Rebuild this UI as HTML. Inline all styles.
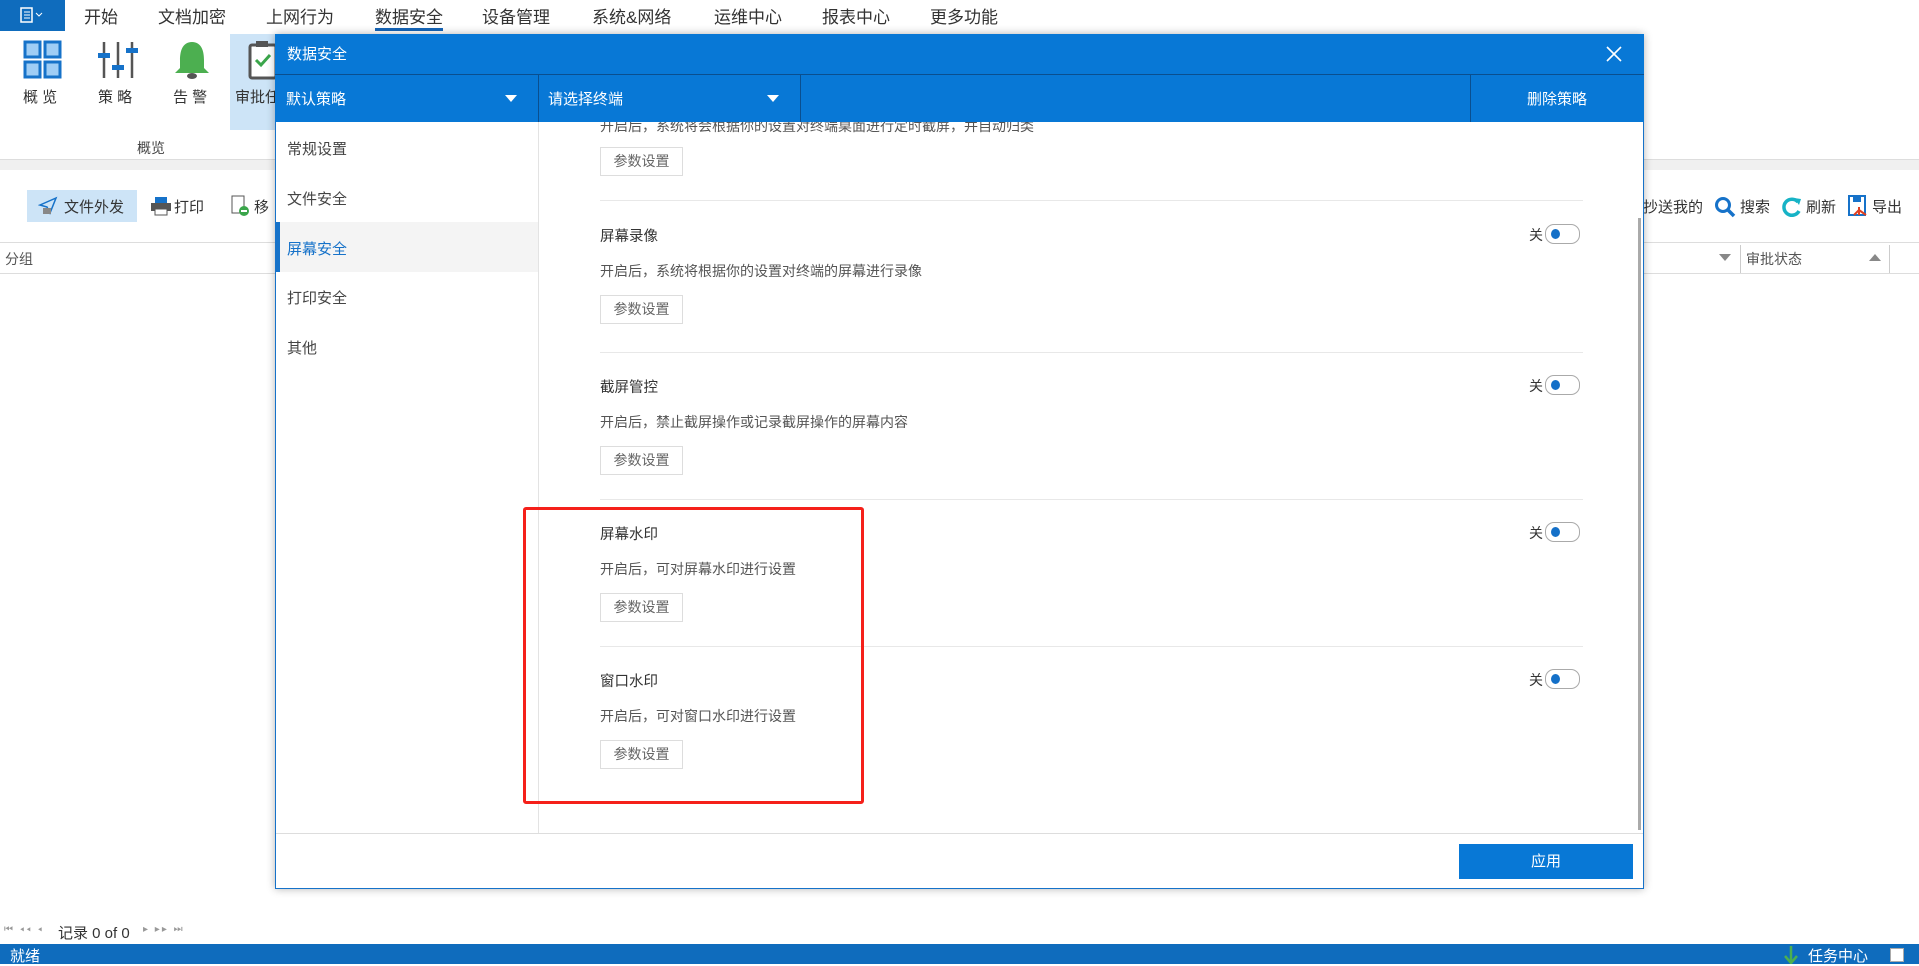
<!DOCTYPE html>
<html><head><meta charset="utf-8"><style>
*{margin:0;padding:0;box-sizing:border-box}
body{width:1919px;height:964px;position:relative;overflow:hidden;background:#fff;font-family:"Liberation Sans","Noto Sans CJK SC",sans-serif;color:#333}
.a{position:absolute;white-space:nowrap}
.tab{top:3px;font-size:17px;color:#333}
.rl{font-size:15px;color:#333;top:86px}
.mi{left:287px;font-size:15px;color:#444}
.ct{left:600px;font-size:14.5px;color:#333}
.cd{left:600px;font-size:14px;color:#555}
.btn{left:600px;width:83px;height:29px;border:1px solid #ddd;font-size:14px;color:#666;text-align:center;line-height:27px;background:#fff}
.sep{left:600px;width:983px;height:1px;background:#e8e8e8}
.off{left:1529px;font-size:14px;color:#333}
.tg{left:1545px;width:35px;height:20px;border:1px solid #aaa;border-radius:9px;background:#fff}
.tg:after{content:"";position:absolute;left:5px;top:4px;width:9px;height:10px;border-radius:50%;background:#1470c8}
</style></head><body>
<!-- top menu -->
<div class="a" style="left:0;top:0;width:65px;height:31px;background:#0f6cbd"></div>
<svg class="a" style="left:20px;top:7px" width="26" height="16"><rect x="1" y="1" width="11" height="14" fill="none" stroke="#fff" stroke-width="1.5"/><line x1="4" y1="5" x2="10" y2="5" stroke="#fff"/><line x1="4" y1="8" x2="10" y2="8" stroke="#fff"/><line x1="4" y1="11" x2="10" y2="11" stroke="#fff"/><path d="M16 6 l3 3 l3 -3" fill="none" stroke="#fff"/></svg>
<div class="a tab" style="left:84px">开始</div>
<div class="a tab" style="left:158px">文档加密</div>
<div class="a tab" style="left:266px">上网行为</div>
<div class="a tab" style="left:375px">数据安全</div>
<div class="a" style="left:375px;top:28px;width:68px;height:3px;background:#1565b8"></div>
<div class="a tab" style="left:482px">设备管理</div>
<div class="a tab" style="left:592px">系统&amp;网络</div>
<div class="a tab" style="left:714px">运维中心</div>
<div class="a tab" style="left:822px">报表中心</div>
<div class="a tab" style="left:930px">更多功能</div>
<!-- ribbon -->
<div class="a" style="left:230px;top:34px;width:50px;height:96px;background:#cde4f7"></div>
<svg class="a" style="left:23px;top:40px" width="40" height="40"><g fill="#9fcdf5" stroke="#1672c9" stroke-width="3"><rect x="2" y="2" width="15" height="15"/><rect x="22" y="2" width="15" height="15"/><rect x="2" y="22" width="15" height="15"/><rect x="22" y="22" width="15" height="15"/></g></svg>
<svg class="a" style="left:98px;top:40px" width="40" height="40"><g stroke="#555" stroke-width="2.5"><line x1="6" y1="2" x2="6" y2="38"/><line x1="20" y1="2" x2="20" y2="38"/><line x1="34" y1="2" x2="34" y2="38"/></g><g fill="#1672c9"><rect x="0" y="13" width="12" height="5"/><rect x="14" y="25" width="12" height="5"/><rect x="28" y="8" width="12" height="5"/></g></svg>
<svg class="a" style="left:172px;top:40px" width="40" height="40"><path d="M20 2 C10 2 8 12 8 20 L8 28 L3 33 L37 33 L32 28 L32 20 C32 12 30 2 20 2Z" fill="#4caf50"/><ellipse cx="20" cy="36" rx="5" ry="3" fill="#555"/></svg>
<svg class="a" style="left:248px;top:40px" width="28" height="40"><rect x="2" y="5" width="26" height="33" rx="2" fill="#fff" stroke="#555" stroke-width="3"/><rect x="8" y="1" width="12" height="6" fill="#555"/><path d="M8 20 l5 5 l9 -10" fill="none" stroke="#3aa54a" stroke-width="3"/></svg>
<div class="a rl" style="left:23px">概&nbsp;览</div>
<div class="a rl" style="left:98px">策&nbsp;略</div>
<div class="a rl" style="left:173px">告&nbsp;警</div>
<div class="a rl" style="left:235px">审批任</div>
<div class="a" style="left:137px;top:138px;font-size:14px;color:#444">概览</div>
<div class="a" style="left:0;top:159px;width:1919px;height:11px;background:#f0f0f0;border-top:1px solid #ddd"></div>
<!-- toolbar -->
<div class="a" style="left:27px;top:190px;width:110px;height:32px;background:#cde4f7"></div>
<svg class="a" style="left:38px;top:196px" width="20" height="20"><path d="M2 9 L18 2 L12 17 L9 11Z" fill="none" stroke="#1672c9" stroke-width="1.5"/><rect x="5" y="12" width="8" height="6" fill="#888"/></svg>
<div class="a" style="left:64px;top:196px;font-size:15px">文件外发</div>
<svg class="a" style="left:150px;top:196px" width="22" height="20"><rect x="5" y="1" width="12" height="6" fill="#1672c9"/><rect x="1" y="7" width="20" height="8" fill="#555"/><rect x="5" y="13" width="12" height="6" fill="#fff" stroke="#555"/></svg>
<div class="a" style="left:174px;top:196px;font-size:15px">打印</div>
<svg class="a" style="left:230px;top:195px" width="20" height="22"><rect x="2" y="1" width="12" height="17" fill="#fff" stroke="#555"/><circle cx="14" cy="16" r="5" fill="#3aa54a"/><rect x="11" y="15" width="6" height="2" fill="#fff"/></svg>
<div class="a" style="left:254px;top:196px;font-size:15px">移</div>
<div class="a" style="left:1643px;top:196px;font-size:15px">抄送我的</div>
<svg class="a" style="left:1714px;top:196px" width="22" height="22"><circle cx="9" cy="9" r="6.5" fill="none" stroke="#1672c9" stroke-width="3"/><line x1="14" y1="14" x2="20" y2="20" stroke="#1672c9" stroke-width="3.5"/></svg>
<div class="a" style="left:1740px;top:196px;font-size:15px">搜索</div>
<svg class="a" style="left:1781px;top:196px" width="22" height="22"><path d="M17 6 A8 8 0 1 0 18 15" fill="none" stroke="#17b3c6" stroke-width="3.5"/><path d="M13 2 L20 3 L18 9Z" fill="#17b3c6"/></svg>
<div class="a" style="left:1806px;top:196px;font-size:15px">刷新</div>
<svg class="a" style="left:1848px;top:195px" width="22" height="22"><rect x="1" y="1" width="16" height="19" fill="#fff" stroke="#1672c9" stroke-width="2"/><rect x="5" y="1" width="8" height="6" fill="#1672c9"/><path d="M11 12 L11 20 M11 15 L6 20 M11 15 L18 20" stroke="#e04020" stroke-width="2"/></svg>
<div class="a" style="left:1872px;top:196px;font-size:15px">导出</div>
<!-- table header -->
<div class="a" style="left:0;top:242px;width:1919px;height:1px;background:#ddd"></div>
<div class="a" style="left:0;top:273px;width:1919px;height:1px;background:#ddd"></div>
<div class="a" style="left:5px;top:249px;font-size:14px;color:#555">分组</div>
<div class="a" style="left:1719px;top:254px;width:0;height:0;border-left:6px solid transparent;border-right:6px solid transparent;border-top:7px solid #888"></div>
<div class="a" style="left:1740px;top:245px;width:1px;height:28px;background:#ccc"></div>
<div class="a" style="left:1746px;top:249px;font-size:14px;color:#555">审批状态</div>
<div class="a" style="left:1869px;top:254px;width:0;height:0;border-left:6px solid transparent;border-right:6px solid transparent;border-bottom:7px solid #888"></div>
<div class="a" style="left:1889px;top:245px;width:1px;height:28px;background:#ccc"></div>
<!-- pager & status -->
<div class="a" style="left:4px;top:924px;font-size:10px;color:#999;letter-spacing:2px">⏮ ◂◂ ◂</div>
<div class="a" style="left:58px;top:922px;font-size:15px;color:#333">记录 0 of 0</div>
<div class="a" style="left:143px;top:924px;font-size:10px;color:#999;letter-spacing:2px">▸ ▸▸ ⏭</div>
<div class="a" style="left:0;top:944px;width:1919px;height:20px;background:#0f6cbd"></div>
<div class="a" style="left:10px;top:945px;font-size:15px;color:#fff">就绪</div>
<svg class="a" style="left:1783px;top:945px" width="16" height="19"><path d="M8 1 L8 18 M2 11 L8 18 L14 11" stroke="#4caf50" stroke-width="2.5" fill="none"/></svg>
<div class="a" style="left:1808px;top:945px;font-size:15px;color:#fff">任务中心</div>
<div class="a" style="left:1890px;top:948px;width:14px;height:14px;background:#fff;border:1px solid #aaa"></div>
<!-- dialog -->
<div class="a" style="left:275px;top:34px;width:1369px;height:855px;background:#fff;border:1px solid #1672c9;box-shadow:0 0 8px rgba(0,0,0,.3)"></div>
<div class="a" style="left:275px;top:34px;width:1369px;height:40px;background:#0878d6"></div>
<div class="a" style="left:287px;top:43px;font-size:15px;color:#fff">数据安全</div>
<svg class="a" style="left:1606px;top:46px" width="16" height="16"><path d="M1 1 L15 15 M15 1 L1 15" stroke="#fff" stroke-width="1.6"/></svg>
<div class="a" style="left:275px;top:74px;width:1369px;height:48px;background:#0878d6;border-top:1px solid #0a4f8f"></div>
<div class="a" style="left:538px;top:75px;width:1px;height:47px;background:#0a4f8f"></div>
<div class="a" style="left:800px;top:75px;width:1px;height:47px;background:#0a4f8f"></div>
<div class="a" style="left:1470px;top:75px;width:1px;height:47px;background:#0a4f8f"></div>
<div class="a" style="left:286px;top:88px;font-size:15px;color:#fff">默认策略</div>
<div class="a" style="left:505px;top:95px;border-left:6px solid transparent;border-right:6px solid transparent;border-top:7px solid #fff"></div>
<div class="a" style="left:548px;top:88px;font-size:15px;color:#fff">请选择终端</div>
<div class="a" style="left:767px;top:95px;border-left:6px solid transparent;border-right:6px solid transparent;border-top:7px solid #fff"></div>
<div class="a" style="left:1527px;top:88px;font-size:15px;color:#fff">删除策略</div>
<!-- left menu -->
<div class="a" style="left:538px;top:122px;width:1px;height:711px;background:#e3e3e3"></div>
<div class="a" style="left:276px;top:222px;width:262px;height:50px;background:#f4f4f4"></div>
<div class="a" style="left:276px;top:222px;width:4px;height:50px;background:#1672c9"></div>
<div class="a mi" style="top:138px">常规设置</div>
<div class="a mi" style="top:188px">文件安全</div>
<div class="a mi" style="top:238px;color:#1672c9">屏幕安全</div>
<div class="a mi" style="top:287px">打印安全</div>
<div class="a mi" style="top:337px">其他</div>
<!-- content -->
<div class="a" style="left:539px;top:122px;width:1095px;height:711px;overflow:hidden">
<div class="a cd" style="left:61px;top:-6px">开启后，系统将会根据你的设置对终端桌面进行定时截屏，并自动归类</div>
</div>
<div class="a btn" style="top:147px">参数设置</div>
<div class="a sep" style="top:200px"></div>

<div class="a ct" style="top:225px">屏幕录像</div>
<div class="a off" style="top:225px">关</div><div class="a tg" style="top:224px"></div>
<div class="a cd" style="top:261px">开启后，系统将根据你的设置对终端的屏幕进行录像</div>
<div class="a btn" style="top:295px">参数设置</div>
<div class="a sep" style="top:352px"></div>

<div class="a ct" style="top:376px">截屏管控</div>
<div class="a off" style="top:376px">关</div><div class="a tg" style="top:375px"></div>
<div class="a cd" style="top:412px">开启后，禁止截屏操作或记录截屏操作的屏幕内容</div>
<div class="a btn" style="top:446px">参数设置</div>
<div class="a sep" style="top:499px"></div>

<div class="a ct" style="top:523px">屏幕水印</div>
<div class="a off" style="top:523px">关</div><div class="a tg" style="top:522px"></div>
<div class="a cd" style="top:559px">开启后，可对屏幕水印进行设置</div>
<div class="a btn" style="top:593px">参数设置</div>
<div class="a sep" style="top:646px"></div>

<div class="a ct" style="top:670px">窗口水印</div>
<div class="a off" style="top:670px">关</div><div class="a tg" style="top:669px"></div>
<div class="a cd" style="top:706px">开启后，可对窗口水印进行设置</div>
<div class="a btn" style="top:740px">参数设置</div>

<div class="a" style="left:1638px;top:218px;width:3px;height:612px;background:#aaa"></div>
<div class="a" style="left:523px;top:507px;width:341px;height:297px;border:3px solid #f5201a;border-radius:3px"></div>
<!-- footer -->
<div class="a" style="left:276px;top:833px;width:1367px;height:1px;background:#ddd"></div>
<div class="a" style="left:1459px;top:844px;width:174px;height:35px;background:#0878d6;color:#fff;font-size:15px;text-align:center;line-height:35px">应用</div>
</body></html>
